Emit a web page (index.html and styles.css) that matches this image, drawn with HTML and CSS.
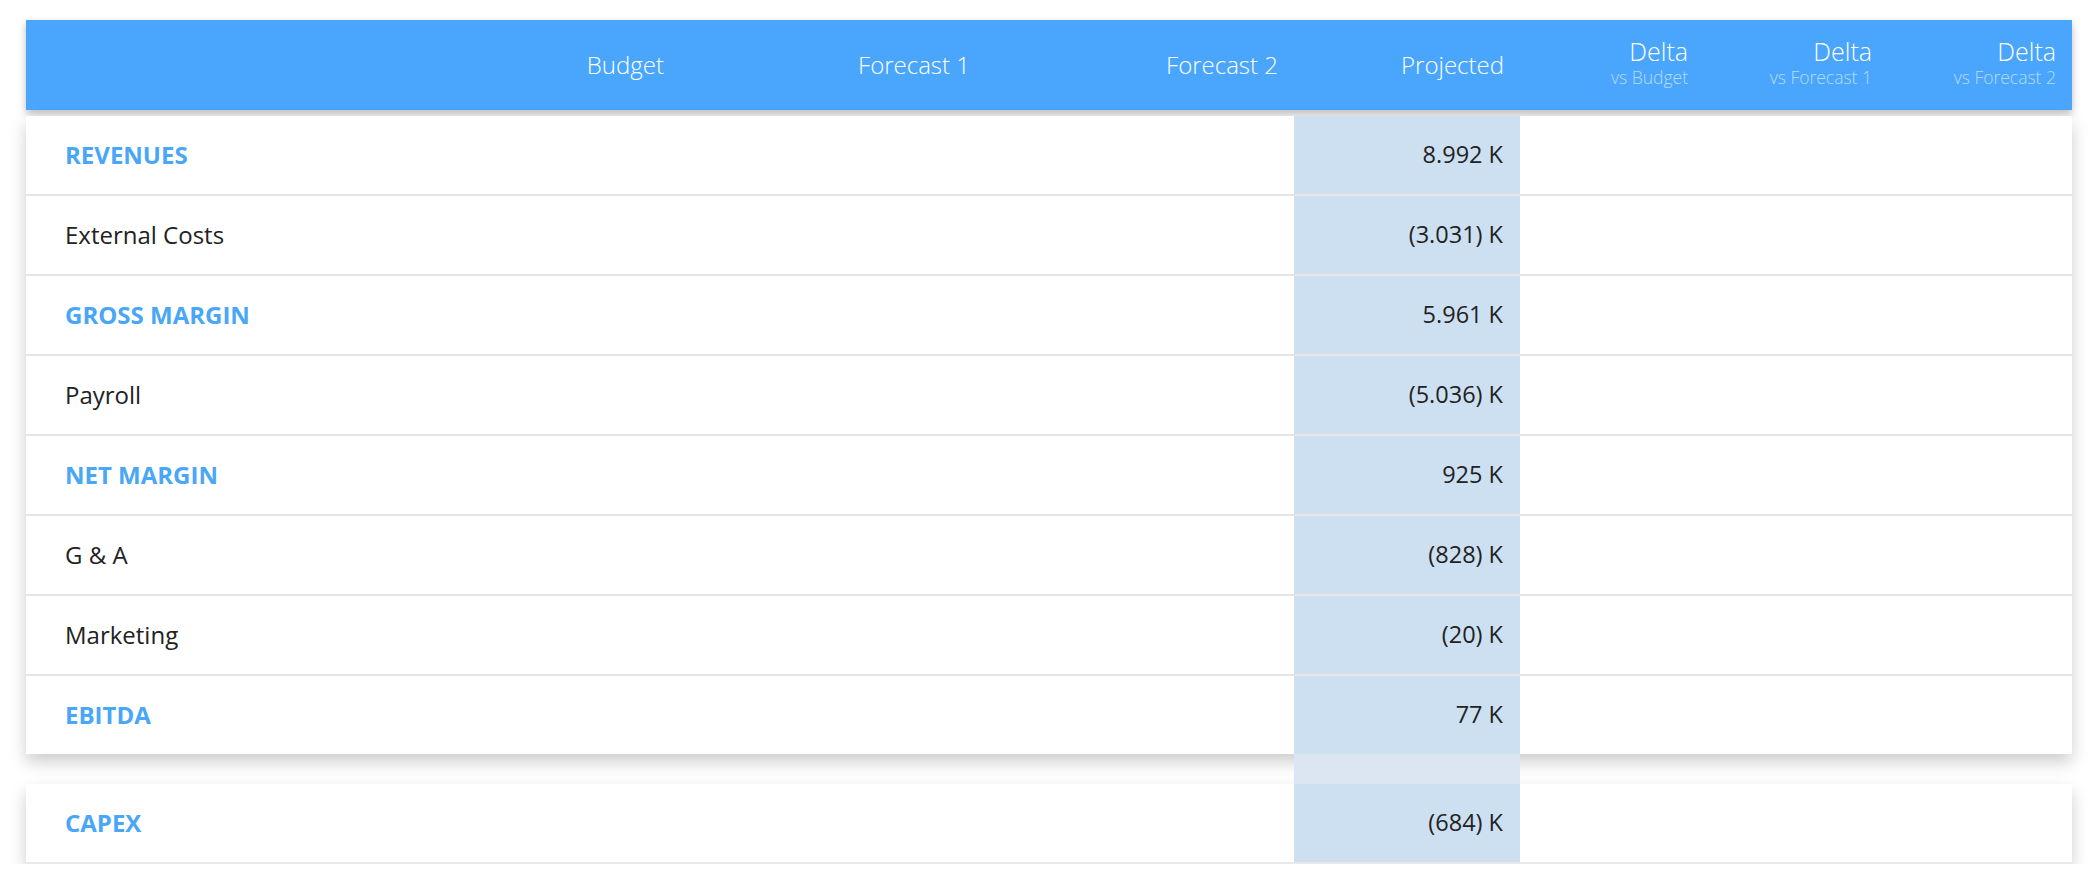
FILE: index.html
```html
<!DOCTYPE html>
<html>
<head>
<meta charset="utf-8">
<link rel="stylesheet" href="styles.css">
</head>
<body>
<div class="table">
  <div class="head row-grid">
    <div class="hcell"></div>
    <div class="hcell"><span class="ht">Budget</span></div>
    <div class="hcell"><span class="ht">Forecast 1</span></div>
    <div class="hcell"><span class="ht">Forecast 2</span></div>
    <div class="hcell"><span class="ht">Projected</span></div>
    <div class="hcell delta"><span class="ht">Delta</span><span class="hs">vs Budget</span></div>
    <div class="hcell delta"><span class="ht">Delta</span><span class="hs">vs Forecast 1</span></div>
    <div class="hcell delta"><span class="ht">Delta</span><span class="hs">vs Forecast 2</span></div>
  </div>

  <div class="card">
    <div class="row row-grid total"><div class="label">REVENUES</div><div></div><div></div><div></div><div class="proj">8.992 K</div><div></div><div></div><div></div></div>
    <div class="row row-grid"><div class="label">External Costs</div><div></div><div></div><div></div><div class="proj">(3.031) K</div><div></div><div></div><div></div></div>
    <div class="row row-grid total"><div class="label">GROSS MARGIN</div><div></div><div></div><div></div><div class="proj">5.961 K</div><div></div><div></div><div></div></div>
    <div class="row row-grid"><div class="label">Payroll</div><div></div><div></div><div></div><div class="proj">(5.036) K</div><div></div><div></div><div></div></div>
    <div class="row row-grid total"><div class="label">NET MARGIN</div><div></div><div></div><div></div><div class="proj">925 K</div><div></div><div></div><div></div></div>
    <div class="row row-grid"><div class="label">G &amp; A</div><div></div><div></div><div></div><div class="proj">(828) K</div><div></div><div></div><div></div></div>
    <div class="row row-grid"><div class="label">Marketing</div><div></div><div></div><div></div><div class="proj">(20) K</div><div></div><div></div><div></div></div>
    <div class="row row-grid total"><div class="label">EBITDA</div><div></div><div></div><div></div><div class="proj">77 K</div><div></div><div></div><div></div></div>
  </div>

  <div class="gap row-grid"><div></div><div></div><div></div><div></div><div class="gap-proj"></div></div>

  <div class="card">
    <div class="row row-grid total last"><div class="label">CAPEX</div><div></div><div></div><div></div><div class="proj">(684) K</div><div></div><div></div><div></div></div>
  </div>
</div>
</body>
</html>
```

FILE: styles.css
```css
html, body {
  margin: 0;
  padding: 0;
  background: #ffffff;
}

body {
  font-family: "Open Sans", "Liberation Sans", sans-serif;
  color: #222222;
}

.table {
  padding: 20px 22px 0 26px;
}

.row-grid {
  display: grid;
  grid-template-columns: 348px 306px 306px 308px 226px 184px 184px 184px;
}

.head {
  position: relative;
  z-index: 1;
  height: 90px;
  background: #4aa6fc;
  box-shadow: 0 4px 8px rgba(0, 0, 0, 0.26);
  margin-bottom: 6px;
}

.hcell {
  display: flex;
  flex-direction: column;
  align-items: flex-end;
  justify-content: center;
  padding-right: 16px;
  color: #ffffff;
}

.ht {
  font-size: 24px;
  font-weight: 300;
  line-height: 28px;
}

.delta {
  padding-bottom: 4px;
}

.delta .ht {
  font-weight: 300;
  font-size: 25px;
}

.hs {
  font-size: 17.5px;
  font-weight: 300;
  line-height: 24px;
  color: rgba(255, 255, 255, 0.6);
}

.card {
  position: relative;
  z-index: 2;
  background: #ffffff;
  box-shadow: 0 8px 16px rgba(0, 0, 0, 0.2);
}

.row {
  height: 78px;
  border-bottom: 2px solid #e6e6e6;
}

.row > div {
  padding-bottom: 2px;
}

.card .row:last-child {
  border-bottom: none;
}

.card .row.last {
  border-bottom: 2px solid #e8e8e8;
}

.label {
  display: flex;
  align-items: center;
  padding-left: 39px;
  font-size: 24px;
  color: #222222;
}

.total .label {
  color: #4aa6f7;
  font-weight: 700;
}

.proj {
  display: flex;
  align-items: center;
  justify-content: flex-end;
  padding-right: 17px;
  background: #cde0f1;
  font-size: 23.5px;
  color: #222222;
}

.gap {
  height: 30px;
}

.gap-proj {
  position: relative;
  z-index: 3;
  background: #dce6f2;
}
```
